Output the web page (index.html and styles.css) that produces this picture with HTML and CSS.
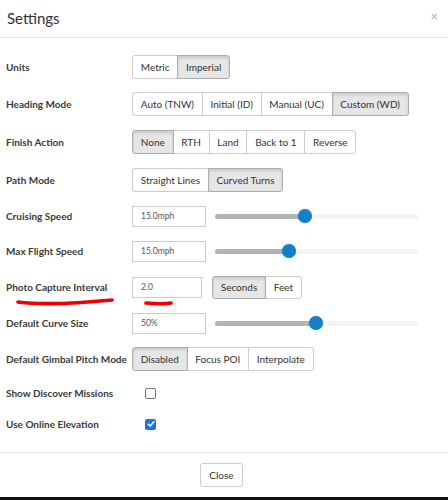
FILE: index.html
```html
<!DOCTYPE html>
<html>
<head>
<meta charset="utf-8">
<link rel="stylesheet" href="styles.css">
</head>
<body>
<div class="modal">
  <div class="header">
    <span class="title">Settings</span>
    <span class="x">&#215;</span>
  </div>
  <div class="body">
    <div class="row">
      <div class="label">Units</div>
      <div class="group"><span class="btn">Metric</span><span class="btn on">Imperial</span></div>
    </div>
    <div class="row h38">
      <div class="label">Heading Mode</div>
      <div class="group"><span class="btn">Auto (TNW)</span><span class="btn">Initial (ID)</span><span class="btn">Manual (UC)</span><span class="btn on">Custom (WD)</span></div>
    </div>
    <div class="row h38">
      <div class="label">Finish Action</div>
      <div class="group"><span class="btn on">None</span><span class="btn">RTH</span><span class="btn">Land</span><span class="btn">Back to 1</span><span class="btn">Reverse</span></div>
    </div>
    <div class="row h38">
      <div class="label">Path Mode</div>
      <div class="group"><span class="btn">Straight Lines</span><span class="btn on">Curved Turns</span></div>
    </div>
    <div class="row h34">
      <div class="label">Cruising Speed</div>
      <div class="input">15.0mph</div>
      <div class="slider"><div class="fill" style="width:44.3%"></div><div class="thumb" style="left:44.3%"></div></div>
    </div>
    <div class="row">
      <div class="label">Max Flight Speed</div>
      <div class="input">15.0mph</div>
      <div class="slider"><div class="fill" style="width:36.5%"></div><div class="thumb" style="left:36.5%"></div></div>
    </div>
    <div class="row mark">
      <div class="label">Photo Capture Interval</div>
      <div class="input short">2.0</div>
      <div class="group gap"><span class="btn on">Seconds</span><span class="btn">Feet</span></div>
      <svg class="ink" width="180" height="12" viewBox="0 0 180 12">
        <path d="M7 8 C 30 11, 70 9, 101 6" fill="none" stroke="#ee0000" stroke-width="3.6" stroke-linecap="round"/>
        <path d="M135 9 C 145 10, 154 10, 160 9" fill="none" stroke="#ee0000" stroke-width="3.6" stroke-linecap="round"/>
      </svg>
    </div>
    <div class="row">
      <div class="label">Default Curve Size</div>
      <div class="input">50%</div>
      <div class="slider"><div class="fill" style="width:49.8%"></div><div class="thumb" style="left:49.8%"></div></div>
    </div>
    <div class="row">
      <div class="label">Default Gimbal Pitch Mode</div>
      <div class="group"><span class="btn on">Disabled</span><span class="btn">Focus POI</span><span class="btn">Interpolate</span></div>
    </div>
    <div class="row h32">
      <div class="label">Show Discover Missions</div>
      <span class="check"></span>
    </div>
    <div class="row h30">
      <div class="label">Use Online Elevation</div>
      <span class="check checked"><svg width="8" height="8" viewBox="0 0 8 8"><path d="M1.3 4.2 L3.2 6 L6.8 1.8" fill="none" stroke="#fff" stroke-width="1.6" stroke-linecap="round" stroke-linejoin="round"/></svg></span>
    </div>
  </div>
  <div class="footer">
    <span class="close">Close</span>
  </div>
  <div class="strip"></div>
</div>
</body>
</html>
```
FILE: styles.css
```css
html, body {
  margin: 0;
  padding: 0;
  background: #fff;
}
body {
  font-family: Lato, "Liberation Sans", sans-serif;
  color: #333;
  width: 448px;
  height: 500px;
  overflow: hidden;
}
.modal {
  width: 448px;
  height: 500px;
  display: flex;
  flex-direction: column;
}
.header {
  height: 37px;
  border-bottom: 1px solid #e5e5e5;
  display: flex;
  align-items: center;
  justify-content: space-between;
  padding: 0 10px 0 7px;
}
.title {
  font-size: 15px;
  color: #333;
  margin-top: -1px;
}
.x {
  font-size: 13px;
  color: #aaa;
  margin-top: -5px;
}
.body {
  padding: 11px 0 13px 6px;
  border-bottom: 1px solid #e5e5e5;
}
.row {
  height: 36px;
  display: flex;
  align-items: center;
  position: relative;
}
.h38 { height: 38px; }
.h34 { height: 34px; }
.h32 { height: 32px; }
.h30 { height: 30px; }
.label {
  width: 126px;
  flex: none;
  font-size: 10px;
  font-weight: 700;
  color: #3a3a3a;
}
.group {
  display: flex;
  height: 24px;
}
.group.gap {
  margin-left: 10px;
  height: 23px;
}
.btn {
  display: flex;
  align-items: center;
  padding: 0 7.75px;
  font-size: 10px;
  color: #333;
  border: 1px solid #ccc;
  background: #fff;
  margin-left: -1px;
}
.btn:first-child {
  margin-left: 0;
  border-radius: 3px 0 0 3px;
}
.btn:last-child {
  border-radius: 0 3px 3px 0;
}
.btn.on {
  background: #e6e6e6;
  border-color: #adadad;
  box-shadow: inset 0 2px 3px rgba(0,0,0,0.125);
  position: relative;
}
.input {
  width: 64px;
  height: 19px;
  border: 1px solid #ccc;
  font-size: 8.5px;
  color: #555;
  padding-left: 8px;
  display: flex;
  align-items: center;
  flex: none;
}
.input.short {
  width: 60px;
}
.slider {
  margin-left: 9px;
  width: 203px;
  height: 5px;
  border-radius: 3px;
  background: #f4f4f4;
  position: relative;
}
.fill {
  height: 5px;
  border-radius: 3px 0 0 3px;
  background: #b3b3b3;
}
.thumb {
  position: absolute;
  top: -5px;
  width: 14px;
  height: 14px;
  margin-left: -7px;
  border-radius: 50%;
  background: #1480cc;
  box-shadow: 0 0 1px rgba(0,0,0,0.3);
}
.ink {
  position: absolute;
  left: 5px;
  top: 25px;
}
.check {
  margin-left: 13px;
  width: 9px;
  height: 9px;
  border: 1px solid #767676;
  border-radius: 2px;
  display: flex;
  align-items: center;
  justify-content: center;
}
.check.checked {
  width: 11px;
  height: 11px;
  border: none;
  background: #1a73e8;
}
.footer {
  height: 44px;
  display: flex;
  justify-content: center;
  align-items: flex-start;
  padding-top: 10px;
  box-sizing: border-box;
}
.close {
  width: 41px;
  height: 22px;
  border: 1px solid #ccc;
  border-radius: 3px;
  display: flex;
  align-items: center;
  justify-content: center;
  font-size: 10px;
  color: #333;
  margin-left: -5px;
}
.strip {
  flex: 1;
  background: #111;
}
```
